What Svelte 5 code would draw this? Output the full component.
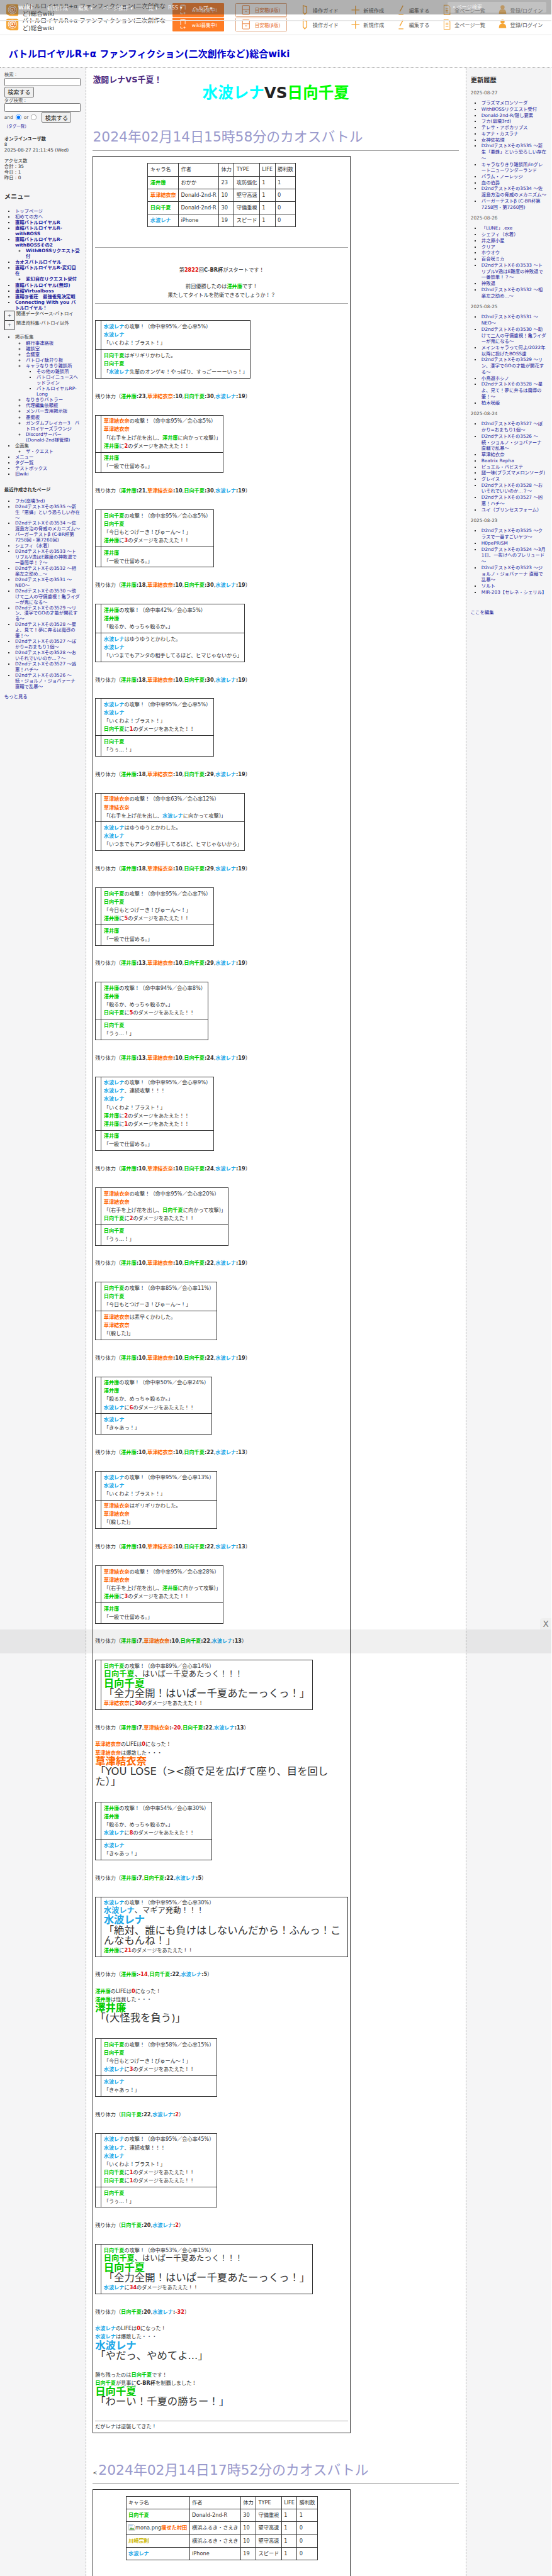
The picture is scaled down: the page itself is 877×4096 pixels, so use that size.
<script>
	const tokenRe = /(澤井廉|草津結衣奈|日向千夏|水波レナ|川崎宗則|痩せた村田|\[[^\]]+\]|C-BR杯)/;
	const nameClass = {
		澤井廉: 'c-sawai',
		草津結衣奈: 'c-kusatsu',
		日向千夏: 'c-hinata',
		水波レナ: 'c-minami',
		川崎宗則: 'c-kawasaki',
		痩せた村田: 'c-kusatsu'
	};
	const parts = (s) => s.split(tokenRe).filter(Boolean);

	const atk = (n, hit, crit) => `${n}の攻撃！（命中率${hit}%／会心率${crit}%）`;
	const dmg = (n, d) => `${n}に[${d}]のダメージをあたえた！！`;
	const hinataLine = '「今日もとつげーき！びゅーん～！」';
	const minamiLine = '「いくわよ！ブラスト！」';
	const sawaiLine = '「殺るか、めっちゃ殺るか。」';
	const sawaiHit = ['澤井廉', '「一級で仕留める。」'];
	const hinataHit = ['日向千夏', '「うぅ...！」'];
	const minamiHit = ['水波レナ', '「きゃあっ！」'];
	const kusatsuLine = (n) => `「(右手を上げ花を出し、${n}に向かって攻撃)」`;
	const dodge = ['水波レナはゆうゆうとかわした。', '水波レナ', '「いつまでもアンタの相手してるほど、ヒマじゃないから」'];
	const allOut = ['^日向千夏、はいぱー千夏あたっく！！！', '#日向千夏', '~「全力全開！はいぱー千夏あたーっくっ！」'];

	const st = (a, b, c, d) => ({
		status: [['澤井廉', a], ['草津結衣奈', b], ['日向千夏', c], ['水波レナ', d]].filter((x) => x[1] !== null)
	});

	const battle = [
		{ rows: [[atk('水波レナ', 95, 5), '水波レナ', minamiLine], ['日向千夏はギリギリかわした。', '日向千夏', '「水波レナ先輩のオンゲキ！やっぱり、すっごーーーいっ！」']] },
		st(23, 10, 30, 19),
		{ rows: [[atk('草津結衣奈', 95, 5), '草津結衣奈', kusatsuLine('澤井廉'), dmg('澤井廉', 2)], sawaiHit] },
		st(21, 10, 30, 19),
		{ rows: [[atk('日向千夏', 95, 5), '日向千夏', hinataLine, dmg('澤井廉', 3)], sawaiHit] },
		st(18, 10, 30, 19),
		{ rows: [[atk('澤井廉', 42, 5), '澤井廉', sawaiLine], dodge] },
		st(18, 10, 30, 19),
		{ rows: [[atk('水波レナ', 95, 5), '水波レナ', minamiLine, dmg('日向千夏', 1)], hinataHit] },
		st(18, 10, 29, 19),
		{ rows: [[atk('草津結衣奈', 63, 12), '草津結衣奈', kusatsuLine('水波レナ')], dodge] },
		st(18, 10, 29, 19),
		{ rows: [[atk('日向千夏', 95, 7), '日向千夏', hinataLine, dmg('澤井廉', 5)], sawaiHit] },
		st(13, 10, 29, 19),
		{ rows: [[atk('澤井廉', 94, 8), '澤井廉', sawaiLine, dmg('日向千夏', 5)], hinataHit] },
		st(13, 10, 24, 19),
		{ rows: [[atk('水波レナ', 95, 9), '水波レナ、連続攻撃！！！', '水波レナ', minamiLine, dmg('澤井廉', 2), dmg('澤井廉', 1)], sawaiHit] },
		st(10, 10, 24, 19),
		{ rows: [[atk('草津結衣奈', 95, 20), '草津結衣奈', kusatsuLine('日向千夏'), dmg('日向千夏', 2)], hinataHit] },
		st(10, 10, 22, 19),
		{ rows: [[atk('日向千夏', 85, 11), '日向千夏', hinataLine], ['草津結衣奈は素早くかわした。', '草津結衣奈', '「(躱した)」']] },
		st(10, 10, 22, 19),
		{ rows: [[atk('澤井廉', 50, 24), '澤井廉', sawaiLine, dmg('水波レナ', 6)], minamiHit] },
		st(10, 10, 22, 13),
		{ rows: [[atk('水波レナ', 95, 13), '水波レナ', minamiLine], ['草津結衣奈はギリギリかわした。', '草津結衣奈', '「(躱した)」']] },
		st(10, 10, 22, 13),
		{ rows: [[atk('草津結衣奈', 95, 28), '草津結衣奈', kusatsuLine('澤井廉'), dmg('澤井廉', 3)], sawaiHit] },
		st(7, 10, 22, 13),
		{ rows: [[atk('日向千夏', 89, 14), ...allOut, dmg('草津結衣奈', 30)]] },
		st(7, -20, 22, 13),
		{ text: ['草津結衣奈のLIFEは[0]になった！', '草津結衣奈は爆散した・・・', '#草津結衣奈', '~「YOU LOSE（><顔で足を広げて座り、目を回した）」'] },
		{ rows: [[atk('澤井廉', 54, 30), '澤井廉', sawaiLine, dmg('水波レナ', 8)], minamiHit] },
		st(7, null, 22, 5),
		{ rows: [[atk('水波レナ', 95, 30), '^水波レナ、マギア発動！！！', '#水波レナ', '~「絶対、誰にも負けはしないんだから！ふんっ！こんなもんね！」', dmg('澤井廉', 21)]] },
		st(-14, null, 22, 5),
		{ text: ['澤井廉のLIFEは[0]になった！', '澤井廉は怪我した・・・', '#澤井廉', '~「(大怪我を負う)」'] },
		{ rows: [[atk('日向千夏', 58, 15), '日向千夏', hinataLine, dmg('水波レナ', 3)], minamiHit] },
		st(null, null, 22, 2),
		{ rows: [[atk('水波レナ', 95, 45), '水波レナ、連続攻撃！！！', '水波レナ', minamiLine, dmg('日向千夏', 1), dmg('日向千夏', 1)], hinataHit] },
		st(null, null, 20, 2),
		{ rows: [[atk('日向千夏', 53, 15), ...allOut, dmg('水波レナ', 34)]] },
		st(null, null, 20, -32),
		{ text: ['水波レナのLIFEは[0]になった！', '水波レナは爆散した・・・', '#水波レナ', '~「やだっ、やめてよ...」'] },
		{ text: ['勝ち残ったのは日向千夏です！', '日向千夏が見事にC-BR杯を制覇しました！', '#日向千夏', '~「わーい！千夏の勝ちー！」'] }
	];

	const entries1 = [
		['澤井廉', 'おかか', 23, '攻防強化', 1, 1],
		['草津結衣奈', 'Donald-2nd-R', 10, '堅守高速', 1, 0],
		['日向千夏', 'Donald-2nd-R', 30, '守備重視', 1, 0],
		['水波レナ', 'iPhone', 19, 'スピード', 1, 0]
	];
	const entries2 = [
		['日向千夏', 'Donald-2nd-R', 30, '守備重視', 1, 1],
		['痩せた村田', '横浜ふるき・さえき', 10, '堅守高速', 1, 0],
		['川崎宗則', '横浜ふるき・さえき', 10, '堅守高速', 1, 0],
		['水波レナ', 'iPhone', 19, 'スピード', 1, 0]
	];
	const heads = ['キャラ名', '作者', '体力', 'TYPE', 'LIFE', '勝利数'];

	const menu1 = [
		{ t: 'トップページ' },
		{ t: '初めての方へ' },
		{ t: '直轄バトルロイヤルR', b: 1 },
		{ t: '直轄バトルロイヤルR-withBOSS', b: 1 },
		{ t: '直轄バトルロイヤルR-withBOSSその2', b: 1, kids: [{ t: 'WithBOSSリクエスト受付' }] },
		{ t: 'カオスバトルロイヤル', b: 1 },
		{ t: '直轄バトルロイヤルR-変幻自在', b: 1, kids: [{ t: '変幻自在リクエスト受付' }] },
		{ t: '直轄バトルロイヤル(無印)', b: 1 },
		{ t: '直轄Virtualboss', b: 1 },
		{ t: '直轄@雀荘　最強雀鬼決定戦', b: 1 },
		{ t: 'Connecting With you バトルロイヤル！', b: 1 }
	];
	const menu2 = [
		{
			t: '掲示板集',
			plain: 1,
			kids: [
				{ t: '軽行事連絡板' },
				{ t: '雑談室' },
				{ t: '会議室' },
				{ t: 'バトロイ駄弁り板' },
				{ t: 'キャラなりきり雑談所', kids: [{ t: 'その他の雑談所' }, { t: 'バトロイニュースヘッドライン' }, { t: 'バトルロイヤルRP-Long' }] },
				{ t: 'なりきりバトラー' },
				{ t: '代理編集依頼板' },
				{ t: 'メンバー専用掲示板' },
				{ t: '愚痴板' },
				{ t: 'ガンダムブレイカー3　バトロイヤーズラウンジ' },
				{ t: 'Discordサーバー(Donald-2nd様管理)' }
			]
		},
		{ t: '企画集', plain: 1, kids: [{ t: 'ザ・クエスト' }] },
		{ t: 'メニュー' },
		{ t: 'タグ一覧' },
		{ t: 'テストボックス' },
		{ t: '旧wiki' }
	];
	const recent = [
		'フカ(崩壊3rd)',
		'D2ndテストXその3535 ～新生「悪蜂」という恐ろしい存在～',
		'D2ndテストXその3534 ～佐渡島方治の脅威のメカニズム～',
		'バーガーテストβ (C-BR杯第7258回・第7260回)',
		'シェフィ（水着）',
		'D2ndテストXその3533 ～トリプルV逸はE難度の神敗退で一番簡単！？～',
		'D2ndテストXその3532 ～相楽左之助め...～',
		'D2ndテストXその3531 ～NEO～',
		'D2ndテストXその3530 ～助けて二人の守備重視！亀ライダーが鬼になる～',
		'D2ndテストXその3529 ～リン、漢字でGOの才能が開花する～',
		'D2ndテストXその3528 ～星よ、見て！夢に奔るは魔導の筆！～',
		'D2ndテストXその3527 ～ぽかり=おまもり1個～',
		'D2ndテストXその3528 ～おいそれでいいのか...？～',
		'D2ndテストXその3527 ～凶悪！ハチ～',
		'D2ndテストXその3526 ～続・ジョルノ・ジョバァーナ 直轄で乱暴～'
	];
	const history = [
		['2025-08-27', ['プラズマメロンソーダ', 'WithBOSSリクエスト受付', 'Donald-2nd-R/隠し要素', 'フカ(崩壊3rd)', 'テレサ・アポカリプス', 'キアナ・カスラナ', '女神佐祐理', 'D2ndテストXその3535 ～新生「悪蜂」という恐ろしい存在～', 'キャラなりきり雑談所/inグレートニューワンダーランド', 'バラム・ノーレッジ', '血の伯爵', 'D2ndテストXその3534 ～佐渡島方治の脅威のメカニズム～', 'バーガーテストβ (C-BR杯第7258回・第7260回)']],
		['2025-08-26', ['「LUNE」.exe', 'シェフィ（水着）', '井之原小星', 'クリア', 'ホウオウ', '百合咲ミカ', 'D2ndテストXその3533 ～トリプルV逸はE難度の神敗退で一番簡単！？～', '神敗退', 'D2ndテストXその3532 ～相楽左之助め...～']],
		['2025-08-25', ['D2ndテストXその3531 ～NEO～', 'D2ndテストXその3530 ～助けて二人の守備重視！亀ライダーが鬼になる～', 'メインキャラって何よ/2022年以降に投げたBOSS達', 'D2ndテストXその3529 ～リン、漢字でGOの才能が開花する～', '小鳥遊ホシノ', 'D2ndテストXその3528 ～星よ、見て！夢に奔るは魔導の筆！～', '柏木咲姫']],
		['2025-08-24', ['D2ndテストXその3527 ～ぽかり=おまもり1個～', 'D2ndテストXその3526 ～続・ジョルノ・ジョバァーナ 直轄で乱暴～', '草津結衣奈', 'Beatrix Repha', 'ピュエル・バビステ', '謎一味(プラズマメロンソーダ)', 'グレイス', 'D2ndテストXその3528 ～おいそれでいいのか...？～', 'D2ndテストXその3527 ～凶悪！ハチ～', 'ユイ（プリンセスフォーム）']],
		['2025-08-23', ['D2ndテストXその3525 ～クラスで一番すごいヤツ～', 'H0pePRiSM', 'D2ndテストXその3524 ～3月1日、一抜けへのプレリュード～', 'D2ndテストXその3523 ～ジョルノ・ジョバァーナ 直轄で乱暴～', 'ソルト', 'MIR-203【セレネ・シェリル】']]
	];
	const navItems = ['操作ガイド', '新規作成', '編集する', '全ページ一覧', '登録/ログイン'];
	const barItems = ['新規作成', '編集 ▾', 'ページ操作 ▾', '一覧 ▾', 'RSS ▾', 'ヘルプ ▾'];
</script>

{#snippet rich(s)}
	{#each parts(s) as p}
		{#if nameClass[p]}<span class="name {nameClass[p]}">{p}</span>{:else if p === 'C-BR杯'}<b>{p}</b>{:else if p[0] === '[' && p.length > 2}<b class="red">{p.slice(1, -1)}</b>{:else}{p}{/if}
	{/each}
{/snippet}

{#snippet line(s)}
	{#if s[0] === '^'}
		<div class="ln"><span class="big">{@render rich(s.slice(1))}</span></div>
	{:else if s[0] === '#'}
		<div class="ln"><span class="huge strong">{@render rich(s.slice(1))}</span></div>
	{:else if s[0] === '~'}
		<div class="ln"><span class="huge">{@render rich(s.slice(1))}</span></div>
	{:else}
		<div class="ln">{@render rich(s)}</div>
	{/if}
{/snippet}

{#snippet tree(items)}
	<ul>
		{#each items as it}
			<li class:bold={it.b}>
				{#if it.plain}<span class="plain">{it.t}</span>{:else}<a href="#top">{it.t}</a>{/if}
				{#if it.kids}{@render tree(it.kids)}{/if}
			</li>
		{/each}
	</ul>
{/snippet}

{#snippet siteHead()}
	<svg class="logo" viewBox="0 0 32 32">
		<path d="M5 1h22a4 4 0 0 1 4 4v21a4 4 0 0 1-4 4H10l-7-3a3 3 0 0 1-2-3V5a4 4 0 0 1 4-4z" fill="#f5a637" />
		<circle cx="16" cy="15" r="11" fill="#fff3dc" />
		<circle cx="16" cy="15" r="8.5" fill="none" stroke="#e8762c" stroke-width="1.6" />
		<circle cx="16" cy="15" r="3.6" fill="none" stroke="#e8762c" stroke-width="1.8" />
		<path d="M19.6 12v4.6a2 2 0 0 0 4 0" fill="none" stroke="#e8762c" stroke-width="1.6" />
	</svg>
	<div class="site-title">バトルロイヤルR+α ファンフィクション(二次創作など)総合wiki</div>
	<div class="cta">
		<svg viewBox="0 0 24 32" width="20" height="26" fill="none" stroke="#fff" stroke-width="1.6">
			<path d="M5 18V2h13v13M9 1v4M14 1v4" /><path d="M5 22v5h6M16 22v6M13 25h6" />
		</svg>
		<span>wiki募集中!</span>
	</div>
	<div class="outline">
		<svg viewBox="0 0 24 32" width="20" height="26" fill="none" stroke="#e8762c" stroke-width="1.6">
			<rect x="2" y="3" width="20" height="26" rx="1.5" /><path d="M2 14h20M9 20h6" />
		</svg>
		<span>目安箱(β版)</span>
	</div>
	<nav class="nav">
		{#each navItems as label, i}
			<div class="nav-item">
				<svg viewBox="0 0 20 28" width="20" height="26" fill="none" stroke="#f5a637" stroke-width="2.2">
					{#if i === 0}
						<path d="M5 3l9 3v14l-5 5-4-5z" />
					{:else if i === 1}
						<path d="M10 3v22M0 14h20" />
					{:else if i === 2}
						<path d="M6 18L14 3M3 25h12" />
					{:else if i === 3}
						<path d="M3 2h10l5 5v19H3zM7 11h7M7 15h7M7 19h7" stroke-width="1.6" />
					{:else}
						<circle cx="11" cy="7" r="4" fill="#f5a637" /><path d="M3 22c0-6 3-9 8-9s8 3 8 9z" fill="#f5a637" />
					{/if}
				</svg>
				<span>{label}</span>
			</div>
		{/each}
	</nav>
{/snippet}

{#snippet charTable(rows, wide)}
	<table class="chars">
		<tbody>
			<tr>{#each heads as h}<td>{h}</td>{/each}</tr>
			{#each rows as r}
				<tr>
					<td>
						{#if wide && r[0] === '痩せた村田'}
							<svg class="broken" viewBox="0 0 16 16" width="16" height="16">
								<path d="M1 1h10l4 4v10H1z" fill="#fff" stroke="#a9a9a9" />
								<path d="M2 13l4-5 3 3 2-2 3 4v1H2z" fill="#5fa857" />
								<path d="M2 2h8v4H2z" fill="#b9d6f2" />
							</svg>mona.png{/if}<span class="name {nameClass[r[0]]}">{r[0]}</span>
					</td>
					{#each r.slice(1) as c}<td>{c}</td>{/each}
				</tr>
			{/each}
		</tbody>
	</table>
{/snippet}

<div class="page" id="top">
	<div class="site-head">{@render siteHead()}</div>
	<div class="site-head ghost">{@render siteHead()}</div>
	<div class="top-bar">
		<span class="bar-logo">wiki</span>
		{#each barItems as b}<span>{b}</span>{/each}
		<div class="bar-search">⌕ ページ検索</div>
	</div>

	<h1 class="wiki-title">バトルロイヤルR+α ファンフィクション(二次創作など)総合wiki</h1>

	<div class="columns">
		<aside class="left">
			<div class="field">検索 :</div>
			<input class="txt" type="text" />
			<button class="btn">検索する</button>
			<div class="field">タグ検索 :</div>
			<input class="txt" type="text" />
			<div class="radios">
				and <input type="radio" name="andor" checked /> or <input type="radio" name="andor" />
				<button class="btn">検索する</button>
			</div>
			<a class="taglist" href="#top">（タグ一覧）</a>

			<p class="online"><b>オンラインユーザ数</b><br />8<br />2025-08-27 21:11:45 (Wed)</p>
			<p class="access">アクセス数<br />合計 : 35<br />今日 : 1<br />昨日 : 0</p>

			<h3 class="side-h">メニュー</h3>
			{@render tree(menu1)}
			<div class="fold"><span class="plus">+</span><span>関連データベース-バトロイ</span></div>
			<div class="fold"><span class="plus">+</span><span>関連資料集-バトロイ以外</span></div>
			<div class="menu2">{@render tree(menu2)}</div>

			<div class="recent-h">最近作成されたページ</div>
			<ul class="recent">
				{#each recent as r}<li><a href="#top">{r}</a></li>{/each}
			</ul>
			<a class="more" href="#top">もっと見る</a>
		</aside>

		<main>
			<h3 class="lead">激闘レナVS千夏！</h3>
			<div class="versus"><span class="vs-a">水波レナ</span><span class="vs-m">VS</span><span class="vs-b">日向千夏</span></div>

			<h2 class="battle-h">2024年02月14日15時58分のカオスバトル</h2>
			<div class="box">
				{@render charTable(entries1, false)}
				<hr class="rule-a" />
				<div class="intro">
					第<b class="red">2822</b>回<b>C-BR杯</b>がスタートです！<br /><br />
					前回優勝したのは<span class="name c-sawai">澤井廉</span>です！<br />
					果たしてタイトルを防衛できるでしょうか！？
				</div>
				<hr class="rule-b" />

				{#each battle as b}
					{#if b.rows}
						<table class="fight">
							<tbody>
								{#each b.rows as row}
									<tr>
										<td class="gutter"></td>
										<td>{#each row as l}{@render line(l)}{/each}</td>
									</tr>
								{/each}
							</tbody>
						</table>
					{:else if b.status}
						<div class="status">
							残り体力（{#each b.status as s, i}{#if i},{/if}<span class="name {nameClass[s[0]]}">{s[0]}</span><b>:</b><b class:red={s[1] < 5}>{s[1]}</b>{/each}）
						</div>
					{:else}
						<div class="story">
							{#each b.text as l}{@render line(l)}{/each}
						</div>
					{/if}
				{/each}

				<hr class="rule-c" />
				<div class="closing">だがレナは逆襲してきた！</div>
			</div>

			<h2 class="battle-h second"><small>&lt;</small>2024年02月14日17時52分のカオスバトル</h2>
			<div class="box last">
				{@render charTable(entries2, true)}
			</div>
		</main>

		<aside class="right">
			<h3 class="side-h hist">更新履歴</h3>
			{#each history as [date, items]}
				<div class="date">{date}</div>
				<ul>
					{#each items as it}<li><a href="#top">{it}</a></li>{/each}
				</ul>
			{/each}
			<a class="edit" href="#top">ここを編集</a>
		</aside>
	</div>

	<div class="ad-band"></div>
	<div class="ad-close">X</div>
</div>

<style>
	:global(body) {
		margin: 0;
		background: #fff;
	}

	.page {
		zoom: 0.6826;
		position: relative;
		width: 1284px;
		height: 6000px;
		overflow: hidden;
		font-family: 'DejaVu Sans', 'Noto Sans CJK JP', sans-serif;
		font-size: 12px;
		color: #333;
	}

	a {
		color: #22229c;
		text-decoration: none;
	}

	/* site header, drawn twice because the capture caught the sticky copy too */
	.site-head {
		display: flex;
		align-items: center;
		height: 48px;
		margin-top: 34px;
		padding-left: 13px;
		box-sizing: border-box;
		border-bottom: 1px solid #e6e6e6;
		background: #fff;
	}

	.ghost {
		position: absolute;
		top: 0;
		left: 0;
		right: 0;
		margin: 0;
		background: transparent;
		box-shadow: 0 1px 2px rgba(0, 0, 0, 0.15);
	}

	.logo {
		flex: none;
		width: 31px;
		height: 30px;
	}

	.site-title {
		width: 342px;
		margin-left: 8px;
		font-size: 14px;
		line-height: 18px;
		color: #444;
	}

	.cta,
	.outline {
		display: flex;
		align-items: center;
		justify-content: center;
		gap: 10px;
		box-sizing: border-box;
		width: 120px;
		height: 32px;
		border-radius: 2px;
		font-size: 11px;
	}

	.cta {
		margin-left: 7px;
		background: #ff7d26;
		color: #fff;
	}

	.outline {
		margin-left: 27px;
		border: 1px solid #e0a47c;
		color: #e8702a;
	}

	.nav {
		display: flex;
		gap: 30px;
		margin-left: 32px;
	}

	.nav-item {
		display: flex;
		align-items: center;
		gap: 8px;
		color: #555;
		white-space: nowrap;
	}

	.top-bar {
		position: absolute;
		top: 0;
		left: 0;
		right: 0;
		display: flex;
		align-items: center;
		gap: 24px;
		height: 34px;
		padding: 0 12px 0 42px;
		box-sizing: border-box;
		background: rgba(60, 60, 60, 0.4);
		color: rgba(255, 255, 255, 0.85);
		white-space: nowrap;
	}

	.bar-logo {
		width: 44px;
		font-weight: bold;
		font-size: 15px;
	}

	.bar-search {
		margin-left: auto;
		width: 231px;
		height: 24px;
		padding-left: 12px;
		line-height: 24px;
		box-sizing: border-box;
		border-radius: 3px;
		background: rgba(255, 255, 255, 0.22);
	}

	.wiki-title {
		height: 76px;
		margin: 0;
		padding: 30px 0 0 20px;
		box-sizing: border-box;
		border-bottom: 1px dotted #aaa;
		font-size: 22px;
		line-height: 30px;
		color: #0000cc;
	}

	.columns {
		display: flex;
		align-items: stretch;
		min-height: 5842px;
	}

	/* side columns */
	.left,
	.right {
		flex: none;
		width: 200px;
		box-sizing: border-box;
		background: #f5f5f6;
		font-size: 10.8px;
	}

	.left {
		padding: 9px 12px 0 10px;
		line-height: 13.3px;
		border-right: 1px dashed #bbb;
	}

	.right {
		padding: 20px 11px 0 10px;
		line-height: 14.27px;
		border-left: 1px dashed #bbb;
	}

	.left ul,
	.right ul {
		margin: 0;
		padding-left: 25px;
		list-style: square;
	}

	.left ul ul {
		list-style: circle;
	}

	.left ul ul ul {
		list-style: square;
	}

	.left .recent {
		line-height: 13.1px;
	}

	.bold {
		font-weight: bold;
	}

	.plain {
		color: #444;
	}

	.field {
		height: 14px;
		color: #555;
	}

	.txt {
		display: block;
		width: 178px;
		height: 20px;
		margin: 0;
		padding: 0 2px;
		box-sizing: border-box;
		border: 1px solid #767676;
		border-radius: 2px;
		background: #fff;
	}

	.btn {
		width: 69px;
		height: 25px;
		margin: 1px 0 0;
		padding: 0;
		border: 1px solid #767676;
		border-radius: 3px;
		background: #efefef;
		color: #111;
		font: 13.3px 'DejaVu Sans', 'Noto Sans CJK JP', sans-serif;
	}

	.radios {
		display: flex;
		align-items: center;
		gap: 4px;
		height: 25px;
		color: #555;
	}

	.radios input {
		margin: 0 2px;
	}

	.radios .btn {
		margin-left: 6px;
	}

	.taglist {
		display: block;
		margin-top: 2px;
		font-size: 9.5px;
	}

	.online {
		margin: 15px 0 0;
	}

	.access {
		margin: 12px 0 0;
	}

	.side-h {
		margin: 0;
		font-size: 15px;
		line-height: 20px;
		color: #333;
	}

	.left .side-h {
		margin: 27px 0 16px;
	}

	.fold {
		display: flex;
		align-items: flex-start;
		height: 22px;
		color: #444;
	}

	.fold:first-of-type {
		margin-top: 12px;
	}

	.plus {
		flex: none;
		width: 21px;
		height: 20px;
		margin-right: 4px;
		border: 1px solid #333;
		background: #f5f5f6;
		text-align: center;
		line-height: 20px;
	}

	.menu2 {
		margin-top: 11px;
	}

	.recent-h {
		margin: 23px 0 14px;
		font-weight: bold;
	}

	.more {
		display: block;
		margin-top: 10px;
	}

	.hist {
		margin-bottom: 11px;
	}

	.date {
		margin-bottom: 10px;
		color: #555;
	}

	.right ul {
		margin-bottom: 11px;
	}

	.edit {
		display: block;
		margin-top: 33px;
	}

	/* main column */
	main {
		flex: none;
		width: 884px;
		box-sizing: border-box;
		padding: 18px 16px 0;
		line-height: 19.2px;
	}

	.lead {
		margin: 0;
		font-size: 19px;
		line-height: 20px;
		color: #4b2a80;
	}

	.versus {
		text-align: center;
		font-size: 36px;
		line-height: 42px;
		font-weight: bold;
		color: #222;
	}

	.vs-a {
		color: #00ffff;
	}

	.vs-b {
		color: #00ff00;
	}

	.battle-h {
		margin: 66px 0 12px;
		padding-bottom: 14px;
		height: 32px;
		border-bottom: 1px solid #999;
		font-size: 32px;
		font-weight: normal;
		line-height: 32px;
		color: #9999cc;
		white-space: nowrap;
	}

	.second {
		margin-top: 70px;
	}

	.second small {
		margin-right: 3px;
		font-size: 12px;
		color: #333;
	}

	.box {
		width: 600px;
		box-sizing: border-box;
		padding: 0 4px;
		border: 2px solid #333;
	}

	.last {
		height: 400px;
	}

	table {
		border-collapse: collapse;
		color: #333;
	}

	td {
		border: 1px solid #333;
		vertical-align: top;
	}

	.chars {
		margin: 15px auto 0;
	}

	.chars td {
		padding: 4.5px 5px;
		white-space: nowrap;
	}

	.broken {
		vertical-align: text-bottom;
	}

	.rule-a,
	.rule-b,
	.rule-c {
		height: 0;
		border: 0;
		border-top: 1px solid #aaa;
	}

	.rule-a {
		margin: 46px 0 43px;
	}

	.intro {
		text-align: center;
	}

	.rule-b {
		margin: 9px 0 39px;
	}

	.fight td {
		padding: 4px 5px;
	}

	.gutter {
		width: 2px;
	}

	.status {
		margin: 32px 0 33.4px;
	}

	.story {
		margin: -14px 0 34px;
	}

	.story + .story {
		margin-top: -12px;
	}

	.rule-c {
		margin: -4px 0 4px;
	}

	.closing {
		padding-bottom: 4px;
	}

	.name {
		font-weight: bold;
	}

	.red {
		color: #e01010;
	}

	.big {
		font-size: 18px;
	}

	.huge {
		font-size: 24px;
	}

	.strong .name {
		font-weight: bold;
	}

	.c-sawai {
		color: #00cc00;
	}

	.c-kusatsu {
		color: #ff6600;
	}

	.c-hinata {
		color: #00cc00;
	}

	.c-minami {
		color: #1ea8e8;
	}

	.c-kawasaki {
		color: #c8b400;
	}

	/* floating ad strip caught in the capture */
	.ad-band {
		position: absolute;
		top: 3796px;
		left: 0;
		right: 0;
		height: 56px;
		background: rgba(0, 0, 0, 0.06);
	}

	.ad-close {
		position: absolute;
		top: 3769px;
		right: 0;
		width: 27px;
		height: 27px;
		border-radius: 6px 0 0 0;
		background: #efefef;
		color: #777;
		font-size: 20px;
		line-height: 27px;
		text-align: center;
	}
</style>
